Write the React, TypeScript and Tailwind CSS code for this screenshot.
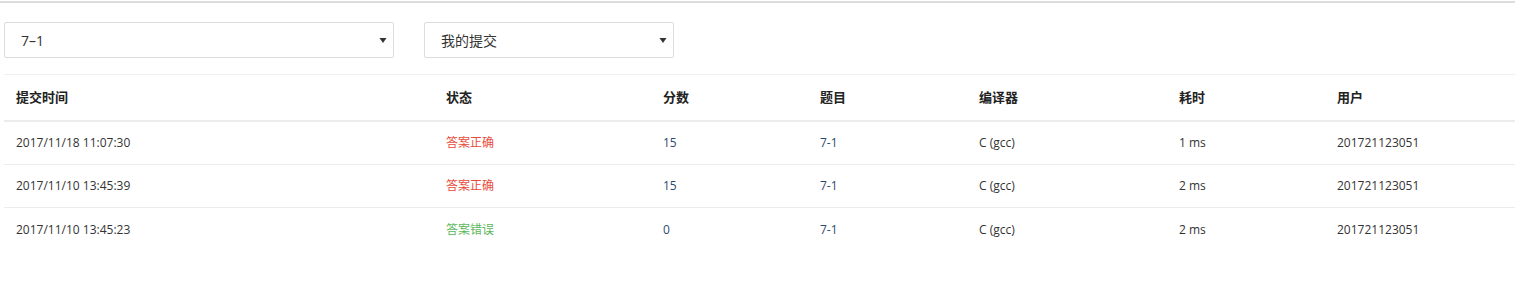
import React from "react";

const rows = [
  { time: "2017/11/18 11:07:30", ok: true, score: "15", prob: "7-1", comp: "C (gcc)", cost: "1 ms", user: "201721123051" },
  { time: "2017/11/10 13:45:39", ok: true, score: "15", prob: "7-1", comp: "C (gcc)", cost: "2 ms", user: "201721123051" },
  { time: "2017/11/10 13:45:23", ok: false, score: "0", prob: "7-1", comp: "C (gcc)", cost: "2 ms", user: "201721123051" },
];

const cols = "grid grid-cols-[430px_217px_157px_159px_200px_158px_1fr]";

function Select({ label, w }: { label: string; w: string }) {
  return (
    <div className={`${w} h-[36px] border border-[#dcdcdc] rounded-[2px] bg-white flex items-center justify-between pl-[16px] pr-[6px] text-[14px] text-[#333]`}>
      <span>{label}</span>
      <svg width="8" height="8" viewBox="0 0 8 8"><path d="M0.5 2 L7.5 2 L4 7 Z" fill="#333" /></svg>
    </div>
  );
}

export default function App() {
  return (
    <div className="w-[1515px] h-[282px] bg-white" style={{ fontFamily: '"Open Sans", "Noto Sans CJK SC", sans-serif' }}>
      <div className="h-[2px] bg-[#dcdcdc] mt-[1px]" />
      <div className="flex gap-[30px] pl-[4px] pt-[19px]">
        <Select label="7–1" w="w-[390px]" />
        <Select label="我的提交" w="w-[250px]" />
      </div>
      <div className="ml-[4px] mt-[16px] border-t border-[#f0f0f0]">
        <div className={`${cols} h-[47px] items-center border-b-2 border-[#ececec] text-[13px] font-bold text-[#222]`}>
          {["提交时间", "状态", "分数", "题目", "编译器", "耗时", "用户"].map((h) => (
            <div key={h} className="pl-[12px]">{h}</div>
          ))}
        </div>
        {rows.map((r, i) => (
          <div key={i} className={`${cols} h-[43px] items-center text-[12px] text-[#333] ${i < rows.length - 1 ? "border-b border-[#ececec]" : ""}`}>
            <div className="pl-[12px]">{r.time}</div>
            <div className={`pl-[12px] ${r.ok ? "text-[#e74c3c]" : "text-[#5cb85c]"}`}>{r.ok ? "答案正确" : "答案错误"}</div>
            <div className="pl-[12px] text-[#2c4a6e]">{r.score}</div>
            <div className="pl-[12px] text-[#2c4a6e]">{r.prob}</div>
            <div className="pl-[12px]">{r.comp}</div>
            <div className="pl-[12px]">{r.cost}</div>
            <div className="pl-[12px]">{r.user}</div>
          </div>
        ))}
      </div>
    </div>
  );
}
